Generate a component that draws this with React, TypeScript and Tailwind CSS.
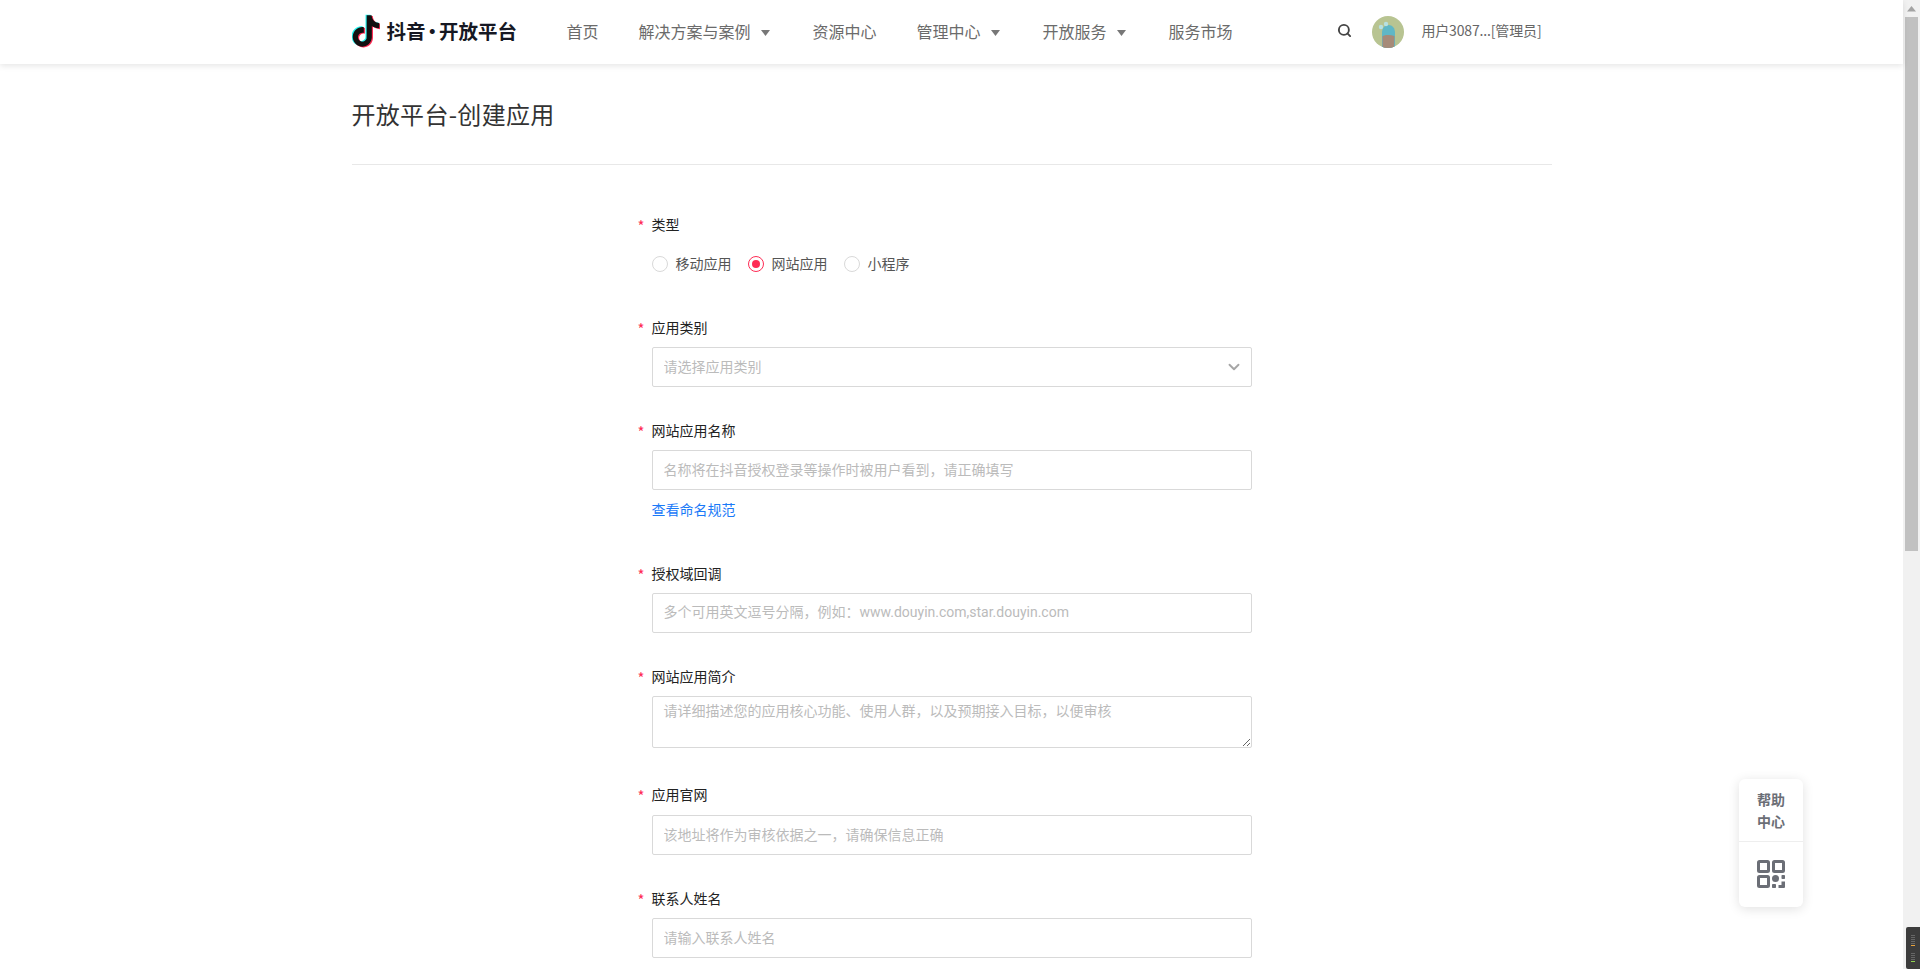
import { ChevronDown, Search } from "lucide-react";

const TIKTOK =
  "M12.525.02c1.31-.02 2.61-.01 3.91-.02.08 1.53.63 3.09 1.75 4.17 1.12 1.11 2.7 1.62 4.24 1.79v4.03c-1.44-.05-2.89-.35-4.2-.97-.57-.26-1.1-.59-1.62-.93-.01 2.92.01 5.84-.02 8.75-.08 1.4-.54 2.79-1.35 3.94-1.31 1.92-3.58 3.17-5.91 3.21-1.43.08-2.86-.31-4.08-1.03-2.02-1.19-3.44-3.37-3.65-5.71-.02-.5-.03-1-.01-1.49.18-1.9 1.12-3.72 2.58-4.96 1.66-1.44 3.98-2.13 6.15-1.72.02 1.48-.04 2.96-.04 4.44-.99-.32-2.15-.23-3.02.37-.63.41-1.11 1.04-1.36 1.75-.21.51-.15 1.07-.14 1.61.24 1.64 1.82 3.02 3.5 2.87 1.12-.01 2.19-.66 2.77-1.61.19-.33.4-.67.41-1.06.1-1.79.06-3.57.07-5.36.01-4.03-.01-8.05.02-12.07z";

function Logo() {
  return (
    <svg width="28" height="34" viewBox="1 -1 22 26" preserveAspectRatio="none" className="mb-[3px] shrink-0">
      <path d={TIKTOK} fill="#25f4ee" transform="translate(-0.9 -0.5)" />
      <path d={TIKTOK} fill="#fe2c55" transform="translate(0.9 0.6)" />
      <path d={TIKTOK} fill="#111111" />
    </svg>
  );
}

function Avatar() {
  return (
    <svg width="32" height="32" viewBox="0 0 32 32" className="shrink-0">
      <clipPath id="av">
        <circle cx="16" cy="16" r="16" />
      </clipPath>
      <g clipPath="url(#av)">
        <rect width="32" height="32" fill="#b8c492" />
        <path d="M10 32V17c0-5 2.500-8 6.500-8s6.500 3 6.500 8v15z" fill="#5fb7c6" />
        <path d="M10.500 32V20c3-1.500 8-1.500 12 0l-.5 12z" fill="#a68a78" />
        <circle cx="9" cy="11" r="2.200" fill="#b6e0e2" />
        <circle cx="14" cy="8" r="2.200" fill="#b6e0e2" />
      </g>
    </svg>
  );
}

function Caret() {
  return (
    <svg width="9" height="6" viewBox="0 0 9 6" className="ml-[10px] mr-[3px] mt-[3px] shrink-0">
      <path d="M0 0h9L4.500 6z" fill="#777777" />
    </svg>
  );
}

function NavItem({ label, caret }: { label: string; caret?: boolean }) {
  return (
    <div className="flex items-center pb-[2px] text-[16px] leading-[24px] text-[#6b6b6b] whitespace-nowrap">
      {label}
      {caret && <Caret />}
    </div>
  );
}

function Label({ text }: { text: string }) {
  return (
    <div className="relative -top-px h-[22px] text-[14px] leading-[22px] text-[#222222]">
      <span className="absolute left-[-14px] top-[2px] text-[15px] text-[#fe2c55]">*</span>
      {text}
    </div>
  );
}

function Radio({ label, checked }: { label: string; checked?: boolean }) {
  return (
    <div className="flex items-center gap-2">
      <span
        className={
          checked
            ? "flex h-4 w-4 items-center justify-center rounded-full border border-[#fe2c55]"
            : "flex h-4 w-4 items-center justify-center rounded-full border border-[#d9d9d9]"
        }
      >
        {checked && <span className="h-2 w-2 rounded-full bg-[#fe2c55]" />}
      </span>
      <span className="pb-[2px] text-[14px] leading-[22px] text-[#555555]">{label}</span>
    </div>
  );
}

const inputCls =
  "block h-[40px] w-full rounded-[2px] border border-[#d9d9d9] bg-white px-[11px] pb-[2px] text-[14px] text-[#333333] outline-none placeholder:text-[#bbbbbb]";

function Field({
  label,
  placeholder,
  mb,
  labelGap = "mb-2",
  latin,
}: {
  label: string;
  placeholder: string;
  mb: string;
  labelGap?: string;
  latin?: boolean;
}) {
  return (
    <div className={mb}>
      <div className={labelGap}>
        <Label text={label} />
      </div>
      <input
        className={latin ? inputCls + " font-['Roboto','Noto_Sans_CJK_SC',sans-serif]" : inputCls}
        placeholder={placeholder}
        readOnly
      />
    </div>
  );
}

function QrIcon() {
  return (
    <svg width="28" height="28" viewBox="0 0 28 28" fill="none">
      <rect x="1.500" y="1.500" width="10" height="10" rx="1" stroke="#6b6e76" strokeWidth="3" />
      <rect x="16.500" y="1.500" width="10" height="10" rx="1" stroke="#6b6e76" strokeWidth="3" />
      <rect x="1.500" y="16.500" width="10" height="10" rx="1" stroke="#6b6e76" strokeWidth="3" />
      <circle cx="18.500" cy="18.500" r="3.500" fill="#6b6e76" />
      <rect x="24.500" y="15" width="3.500" height="4" rx="0.800" fill="#6b6e76" />
      <rect x="15" y="24" width="4" height="4" rx="0.800" fill="#6b6e76" />
      <path d="M24.500 21.500H28V27a1 1 0 0 1-1 1h-5.500v-3h3z" fill="#6b6e76" />
    </svg>
  );
}

export default function App() {
  return (
    <div className="relative flex h-screen overflow-hidden bg-white font-['Noto_Sans_CJK_SC','Noto_Sans',sans-serif]">
      <div className="min-w-0 flex-1">
        <header className="relative h-[64px] bg-white shadow-[0_2px_6px_rgba(0,0,0,0.1)]">
          <div className="mx-auto flex h-full w-[1200px] items-center">
            <div className="flex w-[215px] items-center">
              <Logo />
              <span className="mb-[2px] ml-[7px] flex items-center whitespace-nowrap text-[19.5px] font-bold leading-[28px] text-[#161823]">
                抖音
                <span className="mx-[-3px]">·</span>
                开放平台
              </span>
            </div>
            <nav className="flex items-center gap-[40px]">
              <NavItem label="首页" />
              <NavItem label="解决方案与案例" caret />
              <NavItem label="资源中心" />
              <NavItem label="管理中心" caret />
              <NavItem label="开放服务" caret />
              <NavItem label="服务市场" />
            </nav>
            <div className="ml-auto flex items-center pr-[10px]">
              <Search size={15} strokeWidth={3} className="mb-[4px] text-[#444444]" />
              <div className="ml-[20px]">
                <Avatar />
              </div>
              <span className="ml-[17px] mb-[4px] whitespace-nowrap text-[14px] leading-[22px] tracking-[-0.15px] text-[#666666]">
                用户3087...[管理员]
              </span>
            </div>
          </div>
        </header>

        <main className="mx-auto w-[1200px]">
          <div className="flex h-[101px] items-center border-b border-[#e8e8e8]">
            <h1 className="text-[24px] leading-[36px] tracking-[0.3px] text-[#333333]">开放平台-创建应用</h1>
          </div>
          <form className="ml-[300px] w-[600px] pt-[49px]">
            <Label text="类型" />
            <div className="mt-[17px] mb-[42px] flex h-[22px] items-center gap-4">
              <Radio label="移动应用" />
              <Radio label="网站应用" checked />
              <Radio label="小程序" />
            </div>

            <div className="mb-[33px]">
              <div className="mb-2">
                <Label text="应用类别" />
              </div>
              <div className="relative">
                <input className={inputCls} placeholder="请选择应用类别" readOnly />
                <ChevronDown
                  size={18}
                  strokeWidth={2.5}
                  className="absolute right-[9px] top-[11px] text-[#a6a6a6]"
                />
              </div>
            </div>

            <div className="mb-[43px]">
              <div className="mb-2">
                <Label text="网站应用名称" />
              </div>
              <input
                className={inputCls}
                placeholder="名称将在抖音授权登录等操作时被用户看到，请正确填写"
                readOnly
              />
              <a className="mt-[8px] block text-[14px] leading-[22px] text-[#1a7af8]">查看命名规范</a>
            </div>

            <Field
              label="授权域回调"
              placeholder="多个可用英文逗号分隔，例如：www.douyin.com,star.douyin.com"
              mb="mb-[33px]"
              latin
            />

            <div className="mb-[36px]">
              <div className="mb-2">
                <Label text="网站应用简介" />
              </div>
              <textarea
                className="block h-[52px] w-full rounded-[2px] border border-[#d9d9d9] bg-white px-[11px] py-[2px] text-[14px] leading-[22px] text-[#333333] outline-none placeholder:text-[#bbbbbb]"
                placeholder="请详细描述您的应用核心功能、使用人群，以及预期接入目标，以便审核"
                readOnly
              />
            </div>

            <Field
              label="应用官网"
              placeholder="该地址将作为审核依据之一，请确保信息正确"
              mb="mb-[33px]"
              labelGap="mb-[9px]"
            />
            <Field label="联系人姓名" placeholder="请输入联系人姓名" mb="mb-[33px]" />
          </form>
        </main>
      </div>

      <aside className="flex w-[17px] shrink-0 flex-col items-center bg-[#f1f1f1]">
        <div className="flex h-[17px] items-center justify-center">
          <svg width="9" height="6" viewBox="0 0 9 6">
            <path d="M4.500 0L9 5.500H0z" fill="#a3a3a3" />
          </svg>
        </div>
        <div className="h-[534px] w-[13px] bg-[#c1c1c1]" />
      </aside>

      <div className="absolute left-[1739px] top-[779px] flex h-[128px] w-[64px] flex-col rounded-[6px] bg-white shadow-[0_2px_12px_rgba(0,0,0,0.12)]">
        <div className="flex h-[63px] flex-col items-center justify-center border-b border-[#eeeeee] text-[14px] font-bold leading-[22px] text-[#6b6e76]">
          <span>帮助</span>
          <span>中心</span>
        </div>
        <div className="flex flex-1 items-center justify-center pb-[2px]">
          <QrIcon />
        </div>
      </div>

      <div className="absolute left-[1906px] top-[927px] flex h-[42px] w-[14px] flex-col items-center justify-around rounded-l-[2px] bg-[#3c3c3c] py-[4px]">
        <div className="flex flex-col gap-[1px]">
          <span className="h-[1px] w-[4px] bg-[#666666]" />
          <span className="h-[1px] w-[4px] bg-[#666666]" />
          <span className="h-[1px] w-[4px] bg-[#666666]" />
          <span className="h-[1px] w-[4px] bg-[#666666]" />
          <span className="h-[1px] w-[4px] bg-[#666666]" />
          <span className="h-[1px] w-[4px] bg-[#e8a23c]" />
        </div>
        <div className="flex flex-col gap-[1px]">
          <span className="h-[1px] w-[4px] bg-[#666666]" />
          <span className="h-[1px] w-[4px] bg-[#666666]" />
          <span className="h-[1px] w-[4px] bg-[#666666]" />
          <span className="h-[1px] w-[4px] bg-[#666666]" />
          <span className="h-[1px] w-[4px] bg-[#8fd14f]" />
        </div>
      </div>
    </div>
  );
}
